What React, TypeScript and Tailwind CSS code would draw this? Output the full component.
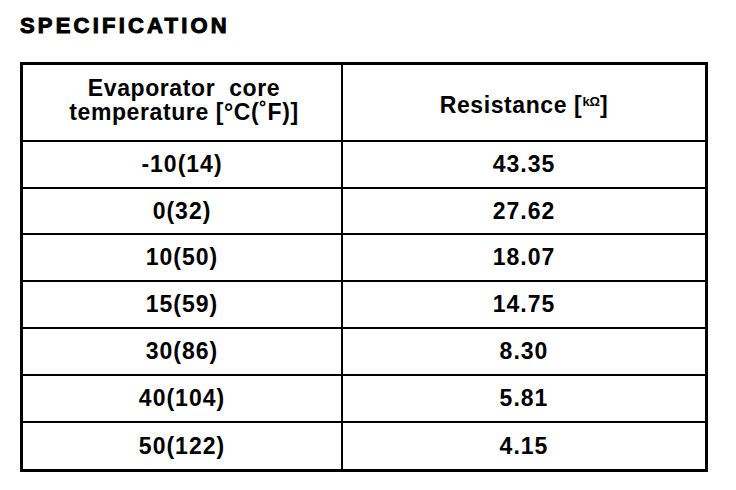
import React from "react";

const rows = [
  ["-10(14)", "43.35"],
  ["0(32)", "27.62"],
  ["10(50)", "18.07"],
  ["15(59)", "14.75"],
  ["30(86)", "8.30"],
  ["40(104)", "5.81"],
  ["50(122)", "4.15"],
];

const heights = ["h-[47px]", "h-[46px]", "h-[47px]", "h-[47px]", "h-[47px]", "h-[47px]", "h-[46px]"];

const App = () => {
  return (
    <div
      className="w-[736px] h-[490px] bg-white text-black pl-[20px] pt-[13px]"
      style={{ fontFamily: '"Liberation Sans", Arial, sans-serif' }}
    >
      <h1 className="text-[22px] font-bold tracking-[3.2px] leading-[26px] [-webkit-text-stroke:1px_black]">
        SPECIFICATION
      </h1>

      <div className="mt-[23px] w-[688px] border-[3px] border-black text-[23px] font-bold tracking-[1px]">
        <div className="flex h-[77px] border-b-2 border-black">
          <div className="w-[320px] border-r-2 border-black flex flex-col items-center justify-center leading-[24px] pl-[4px] pb-[6px]">
            <span className="tracking-[0.6px]">Evaporator&nbsp; core</span>
            <span className="tracking-[0.6px]">temperature [°C(˚F)]</span>
          </div>
          <div className="flex-1 flex items-center justify-center pt-[6px]">
            <span className="tracking-[0.6px]">
              Resistance [<span className="text-[13px] tracking-normal align-[7px]">kΩ</span>]
            </span>
          </div>
        </div>

        {rows.map(([temp, res], i) => (
          <div
            key={temp}
            className={`flex ${heights[i]} ${i < rows.length - 1 ? "border-b-2 border-black" : ""}`}
          >
            <div className="w-[320px] border-r-2 border-black flex items-center justify-center">
              {temp}
            </div>
            <div className="flex-1 flex items-center justify-center">{res}</div>
          </div>
        ))}
      </div>
    </div>
  );
};

export default App;
